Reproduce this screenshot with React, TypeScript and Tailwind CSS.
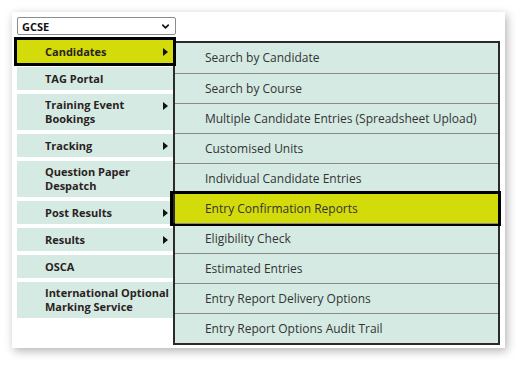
import { ChevronDown } from 'lucide-react';

const sideItems = [
  { label: ['Candidates'], arrow: true, active: true },
  { label: ['TAG Portal'], arrow: false },
  { label: ['Training Event', 'Bookings'], arrow: true },
  { label: ['Tracking'], arrow: true },
  { label: ['Question Paper', 'Despatch'], arrow: false },
  { label: ['Post Results'], arrow: true },
  { label: ['Results'], arrow: true },
  { label: ['OSCA'], arrow: false },
  { label: ['International Optional', 'Marking Service'], arrow: false },
];

const subItems = [
  'Search by Candidate',
  'Search by Course',
  'Multiple Candidate Entries (Spreadsheet Upload)',
  'Customised Units',
  'Individual Candidate Entries',
  'Entry Confirmation Reports',
  'Eligibility Check',
  'Estimated Entries',
  'Entry Report Delivery Options',
  'Entry Report Options Audit Trail',
];

function Arrow() {
  return (
    <svg width="5" height="8" viewBox="0 0 5 8" className="absolute right-[5px] top-[8px]">
      <path d="M0 0 L5 4 L0 8 Z" fill="#111" />
    </svg>
  );
}

export default function App() {
  return (
    <div className="min-h-[367px] bg-white p-3 font-['Open_Sans',sans-serif]">
      {/* Card */}
      <div className="w-[493px] h-[336px] bg-white p-[5px] shadow-[2px_3px_9px_rgba(0,0,0,0.3)]">
        {/* Qualification select */}
        <div className="flex items-center justify-between w-[159px] h-[18px] border border-[#8c8c8c] rounded-[2px] pl-[4px] pr-[4px] bg-white">
          <span className="text-[11px] font-bold text-[#111] leading-none">GCSE</span>
          <ChevronDown size={11} strokeWidth={3.5} color="#111" />
        </div>

        <div className="flex items-start mt-[5px]">
          {/* Side menu */}
          <div className="w-[156px] flex flex-col gap-[4px]">
            {sideItems.map((item) => (
              <div
                key={item.label.join(' ')}
                className={
                  'relative flex flex-col justify-center pl-[28px] pr-[4px] text-[11px] leading-[14px] font-bold text-[#2a2222] whitespace-nowrap ' +
                  (item.label.length > 1 ? 'h-[36px] ' : 'h-[23px] ') +
                  (item.active ? 'bg-[#d3db0b] outline-[3px] outline-solid outline-black' : 'bg-[#d5eae3]')
                }
              >
                {item.label.map((l) => (
                  <div key={l}>{l}</div>
                ))}
                {item.arrow && <Arrow />}
              </div>
            ))}
          </div>

          {/* Flyout submenu */}
          <div className="w-[329px] mt-[1px] border-2 border-[#2b2b2b] bg-[#d5eae3]">
            {subItems.map((s, i) => (
              <div
                key={s}
                className={
                  'relative h-[30px] flex items-center pl-[30px] text-[12px] text-[#333] ' +
                  (i > 0 ? 'border-t border-[#8a8a8a] ' : '') +
                  (s === 'Entry Confirmation Reports' ? 'bg-[#d3db0b]' : '')
                }
              >
                {s}
                {s === 'Entry Confirmation Reports' && (
                  <div className="absolute -left-[5px] -right-[3px] -top-[3px] -bottom-[3px] border-[3px] border-black" />
                )}
              </div>
            ))}
          </div>
        </div>
      </div>
    </div>
  );
}
